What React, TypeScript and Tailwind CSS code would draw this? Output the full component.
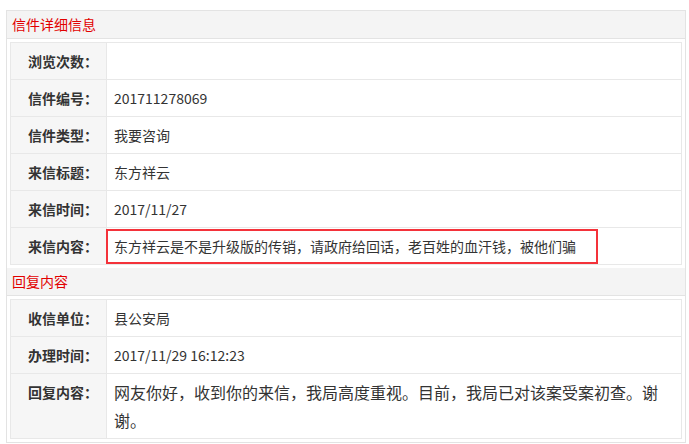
import React from 'react';

type Row = {
  label: string;
  value: string;
  big?: boolean;
  marked?: boolean;
};

const letterRows: Row[] = [
  { label: '浏览次数：', value: '' },
  { label: '信件编号：', value: '201711278069' },
  { label: '信件类型：', value: '我要咨询' },
  { label: '来信标题：', value: '东方祥云' },
  { label: '来信时间：', value: '2017/11/27' },
  {
    label: '来信内容：',
    value: '东方祥云是不是升级版的传销，请政府给回话，老百姓的血汗钱，被他们骗',
    marked: true
  }
];

const replyRows: Row[] = [
  { label: '收信单位：', value: '县公安局' },
  { label: '办理时间：', value: '2017/11/29 16:12:23' },
  {
    label: '回复内容：',
    value: '网友你好，收到你的来信，我局高度重视。目前，我局已对该案受案初查。谢谢。',
    big: true
  }
];

function Section({ title, rows }: { title: string; rows: Row[] }) {
  return (
    <div>
      <div className="h-[28px] bg-[#f4f4f4] border-b border-[#e3e3e3] pl-[5px] text-[14px] leading-[27px] text-[#e20000]">
        {title}
      </div>
      <div className="p-[3px]">
        <table className="w-full border-collapse border border-[#e8e8e8]">
          <colgroup>
            <col className="w-[96px]" />
            <col />
          </colgroup>
          <tbody>
            {rows.map(row => (
              <tr key={row.label}>
                <td className="border border-[#e8e8e8] bg-[#f6f6f6] pr-[8px] py-[4px] text-right align-top text-[14px] leading-[28px] font-bold text-[#333]">
                  {row.label}
                </td>
                <td
                  className={
                    row.big
                      ? 'border border-[#e8e8e8] pl-[7px] pr-[12px] py-[4px] align-top text-[16px] leading-[28px] text-[#333]'
                      : 'relative border border-[#e8e8e8] pl-[7px] pr-[12px] py-[4px] align-top text-[14px] leading-[28px] text-[#333]'
                  }
                >
                  {row.value || '\u00a0'}
                  {row.marked && (
                    <div className="absolute left-[-1px] top-[1px] w-[492px] h-[35px] border-2 border-[#f4323a]" />
                  )}
                </td>
              </tr>
            ))}
          </tbody>
        </table>
      </div>
    </div>
  );
}

export default function App() {
  return (
    <div
      className="w-[689px] h-[444px] bg-white pt-[10px] pl-[6px]"
      style={{ fontFamily: '"Noto Sans CJK SC", "Noto Sans", sans-serif' }}
    >
      <div className="w-[680px] border border-[#e3e3e3]">
        <Section title="信件详细信息" rows={letterRows} />
        <Section title="回复内容" rows={replyRows} />
      </div>
    </div>
  );
}
